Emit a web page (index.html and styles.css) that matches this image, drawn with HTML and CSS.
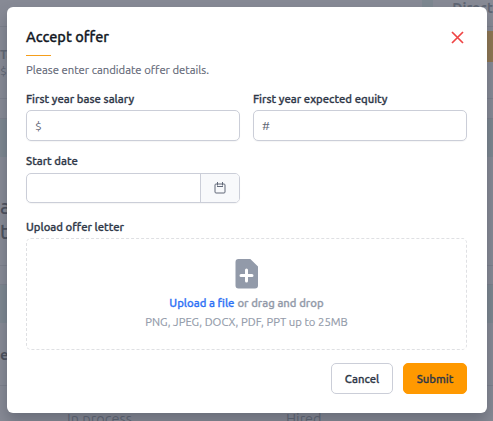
FILE: index.html
```
<!DOCTYPE html>
<html lang="en">
<head>
    <meta charset="utf-8">
    <title>Accept offer</title>
    <link rel="stylesheet" href="styles.css">
</head>
<body>
    <div class="page">
        <div class="row topbar"><div class="tab"></div><span>Direct</span></div>
        <div class="row summary">
            <div class="salary"><b>Ta</b><span>$</span></div>
            <div class="action"></div>
        </div>
        <div class="row gap"></div>
        <div class="row band"></div>
        <div class="row heading"><span>a</span><span>t</span></div>
        <div class="row spacer"></div>
        <div class="row band"></div>
        <div class="row name"><b>e</b></div>
        <div class="row stages"><span>In process</span><span>Hired</span></div>
    </div>

    <div class="overlay">
        <form class="modal">
            <div class="modal-header">
                <h1>Accept offer</h1>
                <svg class="close" width="13" height="13" viewBox="0 0 13 13">
                    <path d="M1 1l11 11M12 1L1 12" />
                </svg>
            </div>
            <p class="description">Please enter candidate offer details.</p>

            <div class="fields">
                <div class="field">
                    <label for="salary">First year base salary</label>
                    <div class="input"><span>$</span><input type="text" id="salary"></div>
                </div>
                <div class="field">
                    <label for="equity">First year expected equity</label>
                    <div class="input"><span>#</span><input type="text" id="equity"></div>
                </div>
                <div class="field">
                    <label for="start_date">Start date</label>
                    <div class="input date">
                        <input type="text" id="start_date">
                        <div class="calendar">
                            <svg width="12" height="12" viewBox="0 0 12 12">
                                <rect x="1" y="2" width="10" height="9" rx="1" />
                                <path d="M3.5 0v3.5M8.5 0v3.5M3 4.5h6" />
                            </svg>
                        </div>
                    </div>
                </div>
            </div>

            <label class="label-upload">Upload offer letter</label>
            <div class="dropzone">
                <svg width="24" height="30" viewBox="0 0 24 30">
                    <path class="file" d="M3.5 0h11.8L23 7.6v18.9a3 3 0 0 1-3 3H3.5a3 3 0 0 1-3-3V3a3 3 0 0 1 3-3z" />
                    <path class="plus" d="M11.5 11v11M6 16.5h11" />
                </svg>
                <div class="drop-text"><a>Upload a file</a><span>or drag and drop</span></div>
                <div class="formats">PNG, JPEG, DOCX, PDF, PPT up to 25MB</div>
            </div>

            <div class="actions">
                <button type="button" class="cancel">Cancel</button>
                <button type="button" class="submit">Submit</button>
            </div>
        </form>
    </div>
</body>
</html>
```
FILE: styles.css
```
* {
    box-sizing: border-box;
}
body {
    margin: 0;
    height: 421px;
    overflow: hidden;
    font-family: Ubuntu, "Noto Sans", sans-serif;
    font-size: 11.3px;
    color: #2f3848;
}

/* dimmed page behind the dialog */
.page {
    height: 421px;
    overflow: hidden;
    background: #878a95;
    color: #5f6673;
}
.row {
    border-bottom: 1px solid #7d808c;
}
.topbar {
    height: 27px;
    display: flex;
    padding-left: 422px;
    font-size: 14px;
    line-height: 17px;
    font-weight: 600;
}
.tab {
    width: 20px;
    background: #7d8790;
    margin-right: 19px;
}
.summary {
    height: 72px;
    display: flex;
    justify-content: space-between;
    font-size: 12px;
    line-height: 16px;
}
.salary {
    display: flex;
    flex-direction: column;
    padding-top: 20px;
}
.action {
    width: 12px;
    height: 31px;
    margin-top: 4px;
    background: #907750;
}
.gap {
    height: 20px;
}
.band {
    height: 38px;
    background: #7d8790;
    border-bottom: 0;
}
.heading {
    height: 109px;
    display: flex;
    flex-direction: column;
    padding-top: 37px;
    font-size: 20px;
    font-weight: 500;
    line-height: 25px;
    color: #4b505c;
}
.spacer {
    height: 19px;
}
.name {
    height: 63px;
    padding-top: 22px;
    font-size: 15px;
    line-height: 20px;
    color: #4b505c;
}
.stages {
    display: flex;
    padding: 22px 0 0 67px;
    font-size: 14.5px;
    line-height: 22px;
}
.stages span {
    flex: 0 0 219px;
}

.overlay {
    position: absolute;
    inset: 0;
    padding: 7px 6px 8px 7px;
}
.modal {
    width: 480px;
    height: 406px;
    padding: 19px 20px 19px 19px;
    display: flex;
    flex-direction: column;
    background: #fff;
    border-radius: 6px;
    box-shadow: 0 8px 14px rgba(55, 60, 75, 0.35);
}
.modal-header {
    display: flex;
    justify-content: space-between;
    height: 30px;
}
h1, label, button, .drop-text {
    -webkit-text-stroke: 0.3px currentColor;
}
h1 {
    margin: 0;
    font-size: 14.5px;
    line-height: 22px;
    font-weight: 500;
    color: #141925;
}
h1::after {
    content: "";
    display: block;
    width: 25px;
    height: 1px;
    margin-top: 7px;
    background: #f59e1b;
}
.close {
    margin: 5px 3px 0 0;
    stroke: #ef4444;
    stroke-width: 1.7;
}
.description {
    margin: 6px 0 0;
    line-height: 16px;
    color: #5f6675;
    -webkit-text-stroke: 0.15px currentColor;
}
.fields {
    display: grid;
    grid-template-columns: 214px 214px;
    column-gap: 13px;
    margin-top: 13px;
}
label {
    display: block;
    height: 19px;
    line-height: 16px;
    font-weight: 500;
    white-space: nowrap;
}
.field {
    height: 62px;
}
.input {
    display: flex;
    align-items: center;
    height: 31px;
    padding-left: 8px;
    border: 1px solid #cbced8;
    border-radius: 5px;
    font-size: 12px;
    color: #5f6675;
    overflow: hidden;
    box-shadow: 0 1px 1px rgba(0, 0, 0, 0.04);
}
.input input {
    flex: 1;
    min-width: 0;
    border: 0;
    outline: 0;
    background: none;
}
.date {
    height: 30px;
    margin-top: 1px;
}
.calendar {
    width: 39px;
    height: 100%;
    display: flex;
    align-items: center;
    justify-content: center;
    border-left: 1px solid #cbced8;
    background: #f8f9fb;
}
.calendar svg {
    fill: none;
    stroke: #626979;
}
.label-upload {
    margin-top: 4px;
}
.dropzone {
    height: 112px;
    display: flex;
    flex-direction: column;
    align-items: center;
    padding-top: 20px;
    border: 1px dashed #dfe0e3;
    border-radius: 5px;
    color: #929aa9;
}
.file {
    fill: #929aa9;
}
.plus {
    stroke: #fff;
    stroke-width: 3;
    stroke-linecap: round;
}
.drop-text {
    display: flex;
    gap: 3px;
    margin-top: 6px;
    line-height: 16px;
    font-weight: 500;
}
.drop-text a {
    color: #2f72f5;
}
.formats {
    margin-top: 3px;
    line-height: 16px;
    white-space: nowrap;
    -webkit-text-stroke: 0.15px currentColor;
}
.actions {
    display: flex;
    justify-content: flex-end;
    gap: 10px;
    margin-top: 13px;
}
button {
    height: 31px;
    padding: 0;
    border: 1px solid #cbced8;
    border-radius: 5px;
    background: #fff;
    color: #2f3848;
    font-family: inherit;
    font-size: 11.3px;
    font-weight: 500;
}
.cancel {
    width: 62px;
}
.submit {
    width: 64px;
    border-color: #ff9900;
    background: #ff9900;
}
```
